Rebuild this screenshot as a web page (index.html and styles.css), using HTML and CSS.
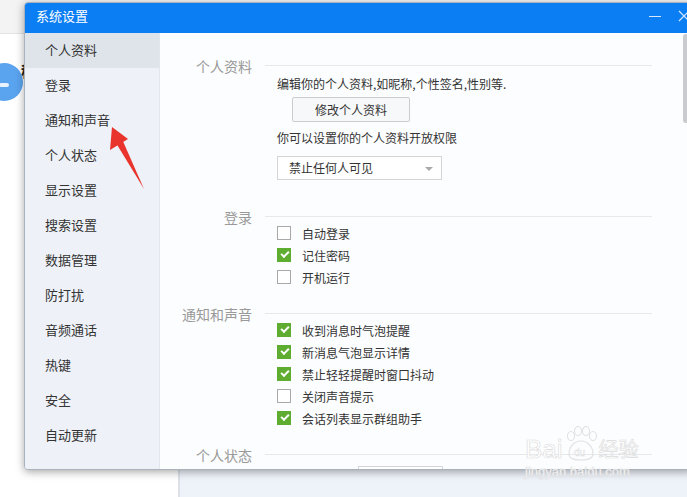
FILE: index.html
```html
<!DOCTYPE html>
<html lang="zh-CN">
<head>
  <meta charset="UTF-8">
  <title>系统设置</title>
  <link rel="stylesheet" href="styles.css">
</head>
<body>
  <div class="app">
    <div class="app-top"></div>
    <div class="app-main">
      <div class="avatar"><span></span></div>
      <div class="nick">稍</div>
    </div>
    <div class="app-bottom">
      <div class="app-bottom-left"></div>
      <div class="app-bottom-right"></div>
    </div>
  </div>

  <div class="dialog">
    <div class="titlebar">
      <span class="title">系统设置</span>
      <div class="win-btns">
        <span class="btn-min"></span>
        <svg class="btn-close" width="12" height="12" viewBox="0 0 12 12"><path d="M1 1L11 11M11 1L1 11" stroke="#d6e8ff" stroke-width="1.2"/></svg>
      </div>
    </div>
    <div class="dlg-body">
      <ul class="side">
        <li class="active">个人资料</li>
        <li>登录</li>
        <li>通知和声音</li>
        <li>个人状态</li>
        <li>显示设置</li>
        <li>搜索设置</li>
        <li>数据管理</li>
        <li>防打扰</li>
        <li>音频通话</li>
        <li>热键</li>
        <li>安全</li>
        <li>自动更新</li>
      </ul>
      <div class="content">
        <div class="scroll-thumb"></div>

        <div class="section first">
          <div class="sec-head"><span class="sec-title">个人资料</span><span class="sec-line"></span></div>
          <div class="sec-body">
            <p class="txt">编辑你的个人资料,如昵称,个性签名,性别等.</p>
            <button class="edit-btn">修改个人资料</button>
            <p class="txt perm">你可以设置你的个人资料开放权限</p>
            <div class="select">禁止任何人可见<span class="caret"></span></div>
          </div>
        </div>

        <div class="section login">
          <div class="sec-head"><span class="sec-title">登录</span><span class="sec-line"></span></div>
          <div class="sec-body checks">
            <label class="row"><span class="box"></span>自动登录</label>
            <label class="row"><span class="box on"></span>记住密码</label>
            <label class="row"><span class="box"></span>开机运行</label>
          </div>
        </div>

        <div class="section notify">
          <div class="sec-head"><span class="sec-title">通知和声音</span><span class="sec-line"></span></div>
          <div class="sec-body checks">
            <label class="row"><span class="box on"></span>收到消息时气泡提醒</label>
            <label class="row"><span class="box on"></span>新消息气泡显示详情</label>
            <label class="row"><span class="box on"></span>禁止轻轻提醒时窗口抖动</label>
            <label class="row"><span class="box"></span>关闭声音提示</label>
            <label class="row"><span class="box on"></span>会话列表显示群组助手</label>
          </div>
        </div>

        <div class="section status">
          <div class="sec-head"><span class="sec-title">个人状态</span><span class="sec-line"></span></div>
          <div class="sec-body">
            <div class="select small"></div>
          </div>
        </div>
      </div>
    </div>
  </div>

  <svg class="arrow" width="687" height="497" viewBox="0 0 687 497">
    <polygon points="112,127 110,150 128,139" fill="#e8342c"/>
    <polygon points="116,143 122,139 144,189" fill="#e8342c"/>
  </svg>

  <div class="watermark">
    <div class="wm-logo">
      <span class="wm-bai">Bai</span>
      <svg class="paw" width="34" height="36" viewBox="0 0 34 36">
        <g fill="none" stroke="#e2e2e2" stroke-width="1.1">
          <ellipse cx="7" cy="10" rx="3.5" ry="4.5"/>
          <ellipse cx="14" cy="5" rx="3.5" ry="4.5"/>
          <ellipse cx="22" cy="5" rx="3.5" ry="4.5"/>
          <ellipse cx="29" cy="10" rx="3.5" ry="4.5"/>
          <path d="M5 28C5 20 11 15 17 15C23 15 29 20 29 28C29 33 23 34 17 34C11 34 5 33 5 28Z"/>
        </g>
        <text x="10" y="30" font-size="10" fill="#fff" stroke="#dadada" stroke-width="0.4" font-family="Liberation Sans, sans-serif">du</text>
      </svg>
      <span class="wm-jy">经验</span>
    </div>
    <div class="wm-url">jingyan.baidu.com</div>
  </div>
</body>
</html>
```

FILE: styles.css
```css
* {
  box-sizing: border-box;
}

body {
  margin: 0;
  width: 687px;
  height: 497px;
  overflow: hidden;
  position: relative;
  font-family: "Noto Sans CJK SC", "Microsoft YaHei", sans-serif;
  background: #ffffff;
  color: #333;
}

/* main window behind the dialog */
.app {
  height: 497px;
  display: flex;
  flex-direction: column;
}

.app-top {
  height: 34px;
  background: #f3f3f4;
  border-bottom: 1px solid #e4e4e4;
}

.app-main {
  flex: 1;
  display: flex;
  align-items: flex-start;
}

.avatar {
  width: 38px;
  height: 38px;
  margin: 29px 0 0 -15px;
  border-radius: 50%;
  background: #5aa3ef;
  position: relative;
}

.avatar span {
  position: absolute;
  left: 14px;
  top: 20px;
  width: 10px;
  height: 4px;
  border-radius: 2px;
  background: #e8f2ff;
}

.nick {
  margin: 26px 0 0 -2px;
  font-size: 15px;
  font-weight: bold;
  color: #222;
}

.app-bottom {
  height: 27px;
  display: flex;
}

.app-bottom-left {
  width: 178px;
  background: #fff;
}

.app-bottom-right {
  flex: 1;
  background: #eef2f9;
  border-left: 2px solid #dde1e7;
}

/* dialog */
.dialog {
  position: absolute;
  left: 24px;
  top: 2px;
  width: 670px;
  height: 468px;
  border: 1px solid #aab2bd;
  border-radius: 4px;
  overflow: hidden;
  background: #fcfdfe;
  box-shadow: 0 2px 8px rgba(0, 0, 0, 0.35);
}

.titlebar {
  height: 30px;
  background: #0c7ef4;
  display: flex;
  align-items: flex-start;
  justify-content: space-between;
  padding-left: 11px;
  padding-right: 3px;
}

.title {
  color: #fff;
  font-size: 13px;
  line-height: 24px;
  margin-top: 1px;
}

.win-btns {
  display: flex;
  align-items: center;
  gap: 17px;
  height: 24px;
  margin-top: 1px;
}

.btn-min {
  width: 12px;
  height: 1px;
  background: #d6e8ff;
}

.dlg-body {
  display: flex;
  height: 436px;
}

.side {
  list-style: none;
  margin: 0;
  padding: 0;
  width: 135px;
  background: #eef2f8;
  border-right: 1px solid #e2e6ed;
}

.side li {
  height: 35px;
  line-height: 33px;
  padding-left: 20px;
  font-size: 13px;
  color: #333;
}

.side li.active {
  background: #dfe3ea;
}

.content {
  flex: 1;
  position: relative;
  overflow: hidden;
  background: #fcfdfe;
  padding-top: 27px;
}

.scroll-thumb {
  position: absolute;
  right: 4px;
  top: 1px;
  width: 6px;
  height: 89px;
  border-radius: 3px;
  background: #c9cbcf;
}

.sec-head {
  display: flex;
  align-items: center;
  height: 10px;
}

.sec-title {
  width: 92px;
  text-align: right;
  font-size: 14px;
  line-height: 10px;
  color: #999;
  position: relative;
  top: 1px;
}

.sec-line {
  flex: 1;
  height: 1px;
  margin-left: 13px;
  margin-right: 41px;
  background: #e6e8eb;
}

.sec-body {
  padding-left: 117px;
}

.txt {
  margin: 5px 0 0 0;
  font-size: 12px;
  line-height: 18px;
  color: #333;
}

.txt.perm {
  margin-top: 7px;
}

.edit-btn {
  display: block;
  margin: 4px 0 0 15px;
  width: 118px;
  height: 25px;
  padding: 0;
  font-family: inherit;
  font-size: 12px;
  color: #333;
  background: #f7f8fa;
  border: 1px solid #c9ccd1;
  border-radius: 2px;
}

.select {
  position: relative;
  margin-top: 9px;
  width: 165px;
  height: 24px;
  line-height: 22px;
  padding-left: 11px;
  font-size: 12px;
  color: #333;
  background: #fff;
  border: 1px solid #d3d5d9;
}

.caret {
  position: absolute;
  right: 8px;
  top: 10px;
  border-left: 4px solid transparent;
  border-right: 4px solid transparent;
  border-top: 4px solid #a9a9a9;
}

.section.login {
  margin-top: 31px;
}

.section.notify {
  margin-top: 20px;
}

.section.status {
  margin-top: 20px;
}

.checks {
  margin-top: 1px;
}

.row {
  display: flex;
  align-items: center;
  height: 22px;
  font-size: 12px;
  color: #333;
}

.box {
  width: 14px;
  height: 14px;
  margin-right: 11px;
  border: 1px solid #a8a8a8;
  background: #fff;
  position: relative;
}

.box.on {
  background: #5fad30;
  border-color: #5fad30;
}

.box.on::after {
  content: "";
  position: absolute;
  left: 3px;
  top: 2px;
  width: 6px;
  height: 3px;
  border-left: 2px solid #fff;
  border-bottom: 2px solid #fff;
  transform: rotate(-45deg);
}

.select.small {
  margin: 7px 0 0 81px;
  width: 85px;
}

/* red annotation arrow */
.arrow {
  position: absolute;
  left: 0;
  top: 0;
  pointer-events: none;
}

/* baidu watermark */
.watermark {
  position: absolute;
  left: 525px;
  top: 426px;
  width: 125px;
  pointer-events: none;
}

.wm-logo {
  display: flex;
  align-items: flex-end;
}

.wm-bai {
  font-family: "Liberation Sans", sans-serif;
  font-size: 26px;
  line-height: 26px;
  color: #fff;
  -webkit-text-stroke: 0.6px #dadada;
}

.paw {
  margin: 0 1px;
}

.wm-jy {
  font-size: 20px;
  line-height: 26px;
  color: #fff;
  -webkit-text-stroke: 0.6px #dadada;
}

.wm-url {
  font-family: "Liberation Sans", sans-serif;
  font-size: 13px;
  line-height: 16px;
  margin-top: 2px;
  color: #fff;
  -webkit-text-stroke: 0.4px #d6d6d6;
}
```
